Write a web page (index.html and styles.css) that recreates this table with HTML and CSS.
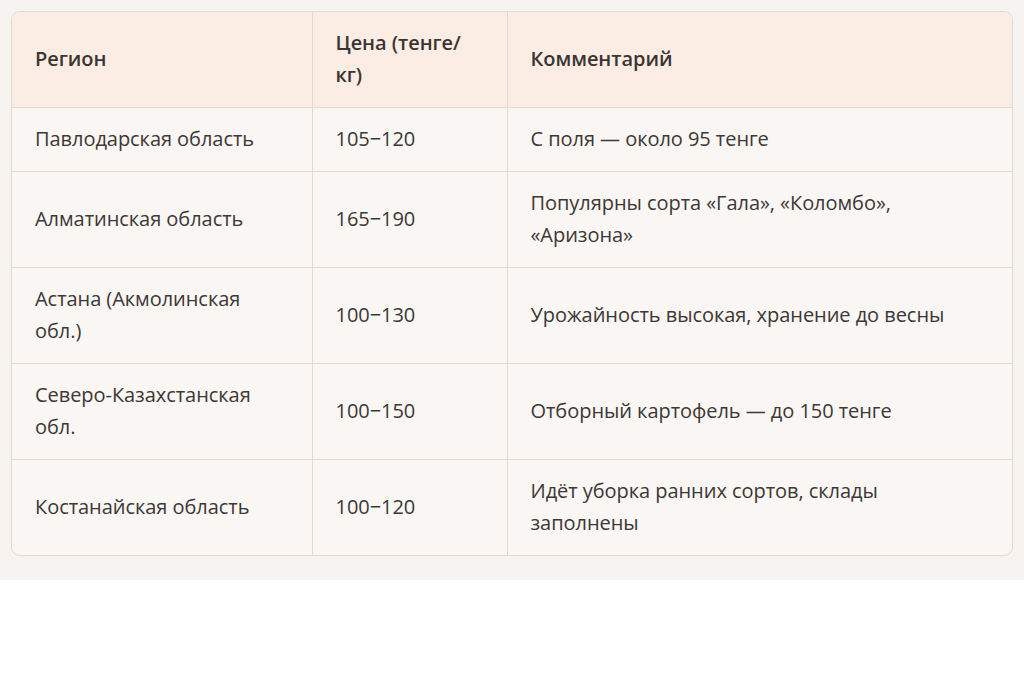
FILE: index.html
```html
<!DOCTYPE html>
<html lang="ru">
<head>
<meta charset="utf-8">
<link rel="stylesheet" href="styles.css">
</head>
<body>
<div class="wrap">
  <div class="card">
    <table class="tbl">
      <colgroup>
        <col class="c1"><col class="c2"><col class="c3">
      </colgroup>
      <thead>
        <tr><th>Регион</th><th>Цена (тенге/<br>кг)</th><th>Комментарий</th></tr>
      </thead>
      <tbody>
        <tr class="short"><td>Павлодарская область</td><td>105−120</td><td>С поля — около 95 тенге</td></tr>
        <tr><td>Алматинская область</td><td>165−190</td><td>Популярны сорта «Гала», «Коломбо»,<br>«Аризона»</td></tr>
        <tr><td>Астана (Акмолинская<br>обл.)</td><td>100−130</td><td>Урожайность высокая, хранение до весны</td></tr>
        <tr><td>Северо-Казахстанская<br>обл.</td><td>100−150</td><td>Отборный картофель — до 150 тенге</td></tr>
        <tr><td>Костанайская область</td><td>100−120</td><td>Идёт уборка ранних сортов, склады<br>заполнены</td></tr>
      </tbody>
    </table>
  </div>
</div>
</body>
</html>
```
FILE: styles.css
```css
html, body {
  margin: 0;
  padding: 0;
  background: #ffffff;
}
body {
  font-family: "Open Sans", "Noto Sans", sans-serif;
  color: #333333;
}
.wrap {
  background: #f6f3f0;
  padding: 11px 11px 24px 11px;
}
.card {
  border: 1px solid #e4d8d0;
  border-radius: 9px;
  overflow: hidden;
  background: #faf6f3;
}
.tbl {
  width: 100%;
  border-collapse: collapse;
  table-layout: fixed;
  font-size: 20px;
  line-height: 32px;
  letter-spacing: -0.05px;
}
.c1 { width: 300px; }
.c2 { width: 195px; }
.tbl th, .tbl td {
  text-align: left;
  vertical-align: middle;
  padding: 14px 23px;
  border-right: 1px solid #e4d8d0;
  border-bottom: 1px solid #e4d8d0;
  box-sizing: border-box;
}
.tbl th:last-child, .tbl td:last-child { border-right: none; }
.tbl tbody tr:last-child td { border-bottom: none; }
.tbl th {
  background: #fbede4;
  font-weight: 600;
  color: #3a3532;
  height: 95px;
}
.tbl td {
  height: 96px;
  color: #3b3836;
}
.tbl tr.short td { height: 64px; }
```
